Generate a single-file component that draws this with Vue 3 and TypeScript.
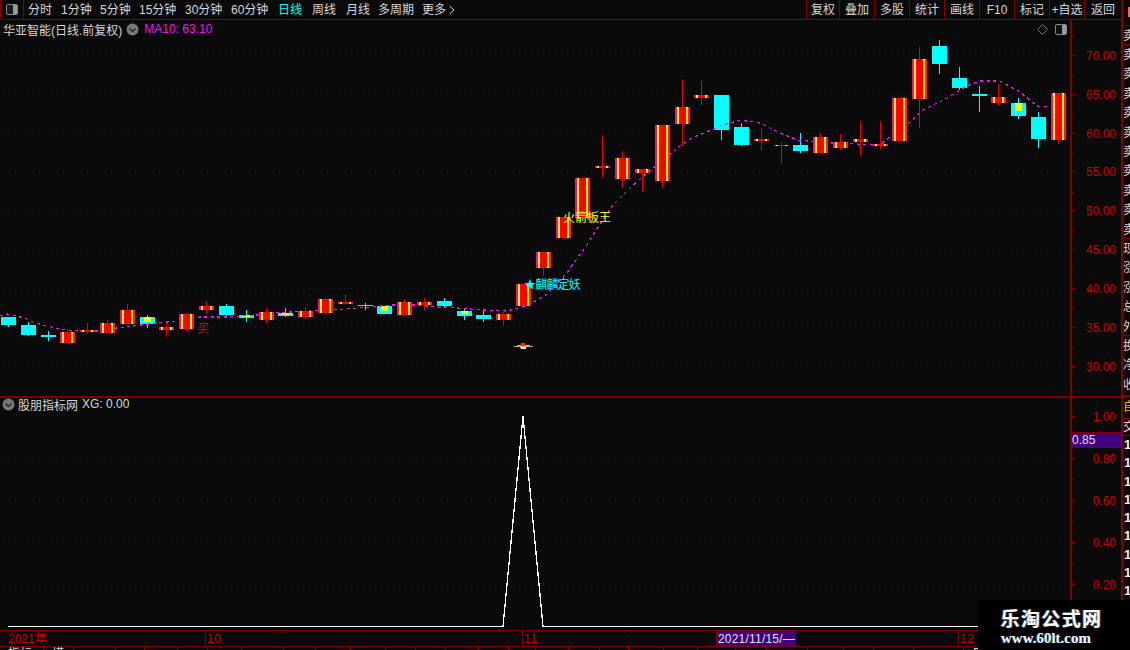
<script setup lang="ts">
type Kind = 'r' | 'c' | 'y'
type Candle = [Kind, number, number, number, number, number?]

const leftItems = [
  { t: '分时', w: 33 }, { t: '1分钟', w: 39 }, { t: '5分钟', w: 39 }, { t: '15分钟', w: 46 }, { t: '30分钟', w: 46 },
  { t: '60分钟', w: 47 }, { t: '日线', w: 34 }, { t: '周线', w: 34 }, { t: '月线', w: 32 }, { t: '多周期', w: 44 },
]
const rightItems = [
  { t: '复权', w: 33 }, { t: '叠加', w: 35 }, { t: '多股', w: 35 }, { t: '统计', w: 35 }, { t: '画线', w: 35 },
  { t: 'F10', w: 35 }, { t: '标记', w: 35 }, { t: '+自选', w: 35 }, { t: '返回', w: 37 },
]

const raw: Candle[] = [
  ['c', 317, 317, 325, 327], ['c', 322, 325, 335, 336], ['c', 331, 335, 337, 341], ['r', 329, 332, 343, 343],
  ['r', 323, 330, 332, 334], ['r', 320, 323, 333, 333], ['r', 304, 310, 324, 324], ['y', 315, 317, 324, 328, 322],
  ['r', 323, 327, 330, 337], ['r', 313, 314, 329, 331], ['r', 301, 306, 310, 314], ['c', 304, 306, 315, 316],
  ['y', 310, 315, 318, 322, 317], ['r', 308, 312, 320, 323], ['y', 308, 313, 316, 317, 315], ['r', 307, 311, 317, 319],
  ['r', 298, 299, 313, 314], ['r', 294, 302, 304, 304], ['c', 303, 305, 306, 310], ['y', 306, 306, 314, 314, 311],
  ['r', 299, 302, 315, 315], ['r', 298, 302, 305, 310], ['c', 298, 301, 306, 308], ['y', 308, 311, 316, 320, 314],
  ['c', 310, 315, 319, 322], ['r', 312, 314, 320, 326], ['r', 284, 284, 306, 306], ['r', 252, 252, 268, 276],
  ['r', 217, 217, 238, 238], ['r', 178, 178, 218, 218], ['r', 135, 166, 168, 178], ['r', 151, 158, 179, 188],
  ['r', 169, 169, 173, 191], ['r', 125, 125, 181, 188], ['r', 79, 107, 124, 146], ['r', 81, 95, 98, 105],
  ['c', 95, 95, 130, 140], ['c', 123, 127, 145, 146], ['r', 128, 139, 141, 150], ['r', 142, 145, 146, 164],
  ['c', 133, 145, 151, 153], ['r', 133, 137, 153, 153], ['r', 134, 142, 148, 150], ['r', 121, 139, 142, 156],
  ['r', 121, 144, 146, 149], ['r', 98, 98, 141, 141], ['r', 47, 59, 99, 128], ['c', 40, 46, 64, 74],
  ['c', 67, 78, 88, 90], ['c', 86, 94, 96, 112], ['r', 84, 97, 103, 106], ['y', 98, 103, 116, 119, 111],
  ['c', 112, 117, 139, 148], ['r', 93, 93, 140, 144],
]

const candles = raw.map((c, i) => ({
  kind: c[0],
  x: Math.round(1 + 19.81 * i),
  wt: c[1],
  top: c[2],
  h: Math.max(c[3] - c[2], 1),
  wb: c[4],
  yb: c[5] ?? c[2],
}))
const cool = candles.filter((c) => c.kind !== 'r')
const hot = candles.filter((c) => c.kind === 'r')

const ma =
  '0,316 8,314 15,316 25,318 33,322 43,325 55,328 67,330 80,331 100,331 117,328 133,326 157,323 177,321 200,317 227,317 257,315 ' +
  '270,313 333,310 370,307 393,305 417,305 437,307 457,308 483,310 507,311 527,306 537,300 547,294 567,273 570,268 587,245 600,224 ' +
  '613,205 633,185 653,168 680,146 692,138 720,126 740,120 760,123 780,133 797,140 830,143 880,145 890,137 907,125 923,110 947,98 ' +
  '967,86 980,81 1000,81 1020,92 1037,106 1050,107'

const priceLabels = ['70.00', '65.00', '60.00', '55.00', '50.00', '45.00', '40.00', '35.00', '30.00'].map((t, i) => ({
  t,
  y: Math.floor(55.3 + 38.88 * i),
}))
const priceMinor = Array.from({ length: 9 }, (_, i) => Math.round(36 + 38.88 * i))
const subLabels = ['1.00', '0.80', '0.60', '0.40', '0.20'].map((t, i) => ({ t, y: 416 + 42 * i }))
const subMinor = Array.from({ length: 5 }, (_, i) => 437 + 42 * i)

const stripWidths = [44, 30, 42, 29, 33, 30, 34, 42, 32, 35, 35, 30, 30, 33, 30, 27, 33, 31, 29, 35, 34, 38, 31, 41, 36, 30, 40, 50, 45, 50]
const stripLabels: Record<number, string> = { 0: '指标', 1: '模', 28: '日' }

const sideTop = ['卖', '卖', '卖', '卖', '卖', '卖', '卖', '卖', '卖', '卖']
const sideMid = ['现', '涨', '涨', '总', '外']
const sideBot = ['换', '净', '收']
const sideNums = Array.from({ length: 9 }, () => '1')
</script>

<template>
  <div class="app">
    <header class="toolbar">
      <div class="toggle">
        <span class="toggle-icon"><i></i></span>
      </div>
      <nav class="periods">
        <span v-for="p in leftItems" :key="p.t" class="period" :class="{ active: p.t === '日线' }" :style="{ width: p.w + 'px' }">{{ p.t }}</span>
        <span class="period more">更多<svg width="8" height="10" viewBox="0 0 8 10"><path d="M1.5 1 L6 5 L1.5 9" fill="none" stroke="#d8d8d8" /></svg></span>
      </nav>
      <div class="tools">
        <span v-for="b in rightItems" :key="b.t" class="tool" :style="{ width: b.w + 'px' }">{{ b.t }}</span>
      </div>
      <div class="corner"><i></i></div>
    </header>

    <div class="work">
      <div class="charts">
        <section class="pane main-pane">
          <div class="pane-head">
            <span class="name">华亚智能(日线.前复权)</span>
            <svg class="chev" width="13" height="13" viewBox="0 0 13 13"><circle cx="6.5" cy="6.5" r="6" fill="#777" /><path d="M3.5 5.5 L6.5 8.5 L9.5 5.5" fill="none" stroke="#222" stroke-width="1.4" /></svg>
            <span class="ma">MA10: 63.10</span>
          </div>
          <div class="pane-icons">
            <svg width="11" height="11" viewBox="0 0 11 11"><path d="M5.5 0.5 L10.5 5.5 L5.5 10.5 L0.5 5.5 Z" fill="none" stroke="#777" /></svg>
            <span class="toggle-icon small"><i></i></span>
          </div>
          <svg class="plot" width="1121" height="376" viewBox="0 20 1121 376">
            <g shape-rendering="crispEdges">
              <line v-for="l in priceLabels" :key="l.t" x1="3" x2="1067" :y1="l.y + 0.5" :y2="l.y + 0.5" class="grid" />
              <template v-for="(c, i) in cool" :key="'c' + i">
                <rect :x="c.x + 7" :y="c.wt" width="1" :height="c.wb - c.wt" fill="#00ffff" />
                <rect :x="c.x" :y="c.top" width="15" :height="c.h" fill="#00ffff" />
                <rect v-if="c.kind === 'y'" :x="c.x + 4" :y="c.top" width="7" :height="c.yb - c.top" fill="#ffff00" />
              </template>
              <polyline :points="ma" fill="none" stroke="#f014f0" stroke-width="1.2" stroke-dasharray="3 3.5" />
              <template v-for="(c, i) in hot" :key="'r' + i">
                <rect :x="c.x + 7" :y="c.wt" width="1" :height="c.wb - c.wt" fill="#e60000" />
                <rect :x="c.x" :y="c.top" width="15" :height="c.h" fill="#ff0a78" />
                <rect :x="c.x + 2" :y="c.top" width="11" :height="c.h" fill="#ffff00" />
                <rect :x="c.x + 4" :y="c.top" width="7" :height="c.h" fill="#ff0000" />
              </template>
              <g class="bird">
                <rect x="514" y="346" width="19" height="1" fill="#b0b0b0" />
                <rect x="517" y="345" width="13" height="2" fill="#e8b020" />
                <rect x="521" y="343" width="4" height="3" fill="#ff2020" />
                <rect x="520" y="347" width="6" height="1" fill="#ffff40" />
                <rect x="521" y="348" width="5" height="1" fill="#e8e8e8" />
              </g>
              <rect x="1070" y="20" width="2" height="376" fill="#800000" />
              <rect v-for="l in priceLabels" :key="'t' + l.t" x="1071" :y="l.y" width="5" height="1" fill="#800000" />
              <rect v-for="y in priceMinor" :key="'m' + y" x="1071" :y="y" width="3" height="1" fill="#800000" />
            </g>
            <text v-for="l in priceLabels" :key="'n' + l.t" x="1116" :y="l.y + 5" class="num">{{ l.t }}</text>
            <text x="197" y="333" class="tag buy">买</text>
            <text x="524" y="289" class="tag cyan">★麒麟定妖</text>
            <text x="563" y="222" class="tag gold">火箭板王</text>
          </svg>
        </section>

        <section class="pane sub-pane">
          <div class="pane-head sub-head">
            <svg class="chev first" width="13" height="13" viewBox="0 0 13 13"><circle cx="6.5" cy="6.5" r="6" fill="#777" /><path d="M3.5 5.5 L6.5 8.5 L9.5 5.5" fill="none" stroke="#222" stroke-width="1.4" /></svg>
            <span class="name">股朋指标网</span>
            <span class="xg">XG: 0.00</span>
          </div>
          <svg class="plot" width="1121" height="232" viewBox="0 398 1121 232">
            <g shape-rendering="crispEdges">
              <line v-for="l in subLabels.slice(1)" :key="l.t" x1="3" x2="1067" :y1="l.y + 0.5" :y2="l.y + 0.5" class="grid" />
              <polyline points="8,626.5 503,626.5 523,416 543,626.5 1000,626.5" fill="none" stroke="#ffffff" stroke-width="1.3" />
              <rect x="1070" y="398" width="2" height="232" fill="#800000" />
              <rect v-for="l in subLabels" :key="'t' + l.t" x="1071" :y="l.y" width="5" height="1" fill="#800000" />
              <rect v-for="y in subMinor" :key="'m' + y" x="1071" :y="y" width="3" height="1" fill="#800000" />
            </g>
            <text v-for="l in subLabels" :key="'n' + l.t" x="1116" :y="l.y + 5" class="num">{{ l.t }}</text>
          </svg>
          <div class="cursor-value">0.85</div>
        </section>

        <footer class="timeline">
          <span class="tick first-tick">2021年</span>
          <span class="tick at-10">10</span>
          <span class="mark at-a"></span>
          <span class="tick at-11">11</span>
          <span class="mark at-b"></span>
          <span class="cursor-date">2021/11/15/—</span>
          <span class="tick at-12">12</span>
        </footer>
        <div class="strip">
          <span v-for="(w, i) in stripWidths" :key="i" class="cell" :style="{ width: w + 'px' }">{{ stripLabels[i] ?? '' }}</span>
        </div>
      </div>

      <aside class="side">
        <div class="side-group hd"><span>卖</span></div>
        <div class="side-group g1"><span v-for="(s, i) in sideTop" :key="i">{{ s }}</span></div>
        <div class="side-group g2"><span v-for="(s, i) in sideMid" :key="i">{{ s }}</span></div>
        <div class="side-group g3"><span v-for="(s, i) in sideBot" :key="i">{{ s }}</span></div>
        <div class="side-group g4">
          <span class="self">自</span>
          <span class="deal">交</span>
          <b v-for="(s, i) in sideNums" :key="i">{{ s }}</b>
        </div>
      </aside>
    </div>

    <div class="watermark">
      <div class="wm-title">乐淘公式网</div>
      <div class="wm-url">www.60lt.com</div>
    </div>
  </div>
</template>

<style>
html, body { margin: 0; background: #0a0a0a; overflow: hidden; }
</style>

<style scoped>
.app {
  position: relative;
  width: 1130px;
  height: 650px;
  overflow: hidden;
  display: flex;
  flex-direction: column;
  background: #0a0a0a;
  color: #d8d8d8;
  font-family: "Liberation Sans", "Noto Sans CJK SC", sans-serif;
  font-size: 12px;
}
.toolbar {
  flex: none;
  height: 19px;
  display: flex;
  align-items: stretch;
  border-bottom: 1px solid #800000;
  line-height: 21px;
}
.toggle {
  width: 24px;
  box-sizing: border-box;
  border-right: 1px solid #800000;
  border-left: 1px solid #800000;
  display: flex;
  align-items: center;
  justify-content: center;
}
.toggle-icon {
  box-sizing: border-box;
  width: 12px;
  height: 11px;
  border: 1px solid #888;
  border-radius: 2px;
  display: flex;
  justify-content: flex-end;
  background: #1a1a1a;
}
.toggle-icon i { display: block; width: 4px; background: #999; }
.periods { display: flex; margin-left: 4px; width: 778px; }
.period { white-space: nowrap; flex: none; }
.period.active { color: #00ffff; }
.more svg { margin-left: 2px; vertical-align: -1px; }
.tools { display: flex; }
.tool {
  box-sizing: border-box;
  border-left: 1px solid #800000;
  text-align: center;
  white-space: nowrap;
}
.corner {
  flex: 1;
  align-self: flex-start;
  height: 20px;
  box-sizing: border-box;
  border-left: 2px solid #800000;
  background: #0a0a0a;
  display: flex;
  align-items: center;
  justify-content: flex-end;
}
.corner i { display: block; width: 2px; height: 10px; background: #ff6050; margin-top: 4px; }
.work { flex: 1; display: flex; min-height: 0; }
.charts { width: 1121px; display: flex; flex-direction: column; border-right: 2px solid #800000; }
.pane { position: relative; }
.main-pane { height: 376px; border-bottom: 2px solid #800000; }
.sub-pane { height: 232px; }
.plot { display: block; }
.pane-head {
  position: absolute;
  left: 3px;
  top: 1px;
  display: flex;
  align-items: center;
  height: 16px;
  z-index: 1;
}
.sub-head { left: 3px; top: -2px; }
.chev { margin-left: 4px; }
.chev.first { margin: 0 3px 0 -1px; }
.ma { margin-left: 5px; color: #f014f0; }
.xg { margin-left: 4px; }
.pane-icons {
  position: absolute;
  top: 4px;
  left: 1037px;
  display: flex;
  gap: 7px;
  align-items: center;
}
.toggle-icon.small { background: #111; }
.grid { stroke: #6a0808; stroke-dasharray: 1 5; }
.num { fill: #c80000; font-size: 12px; text-anchor: end; }
.tag { font-size: 12px; }
.buy { fill: #d01010; }
.cyan { fill: #00ffff; letter-spacing: -0.8px; }
.gold { fill: #ffff00; }
.cursor-value {
  position: absolute;
  left: 1072px;
  top: 34px;
  box-sizing: border-box;
  width: 49px;
  height: 16px;
  line-height: 14px;
  border-top: 1px solid #800000;
  border-bottom: 1px solid #800000;
  background: #40007f;
  color: #e0e0e0;
}
.timeline {
  position: relative;
  flex: none;
  height: 17px;
  box-sizing: border-box;
  border-top: 1px solid #800000;
  border-bottom: 1px solid #800000;
  line-height: 16px;
  color: #c80000;
}
.tick { position: absolute; top: 0; white-space: nowrap; height: 15px; padding-left: 1px; }
.first-tick { left: 7px; }
.at-10, .at-11, .at-12 { border-left: 1px solid #800000; letter-spacing: 0.5px; }
.at-10 { left: 205px; }
.at-11 { left: 522px; }
.at-12 { left: 958px; }
.mark { position: absolute; top: 0; width: 1px; height: 2px; background: #800000; }
.at-a { left: 284px; }
.at-b { left: 631px; }
.cursor-date {
  position: absolute;
  left: 716px;
  top: 0;
  box-sizing: border-box;
  width: 80px;
  height: 15px;
  padding-left: 1px;
  background: #40007f;
  border-left: 1px solid #800000;
  border-right: 1px solid #800000;
  color: #e0e0e0;
  white-space: nowrap;
  letter-spacing: 0.2px;
}
.strip { flex: 1; display: flex; overflow: hidden; min-height: 0; }
.cell {
  flex: none;
  box-sizing: border-box;
  height: 14px;
  padding-left: 8px;
  border-right: 1px solid #800000;
  line-height: 14px;
  overflow: hidden;
  color: #d8d8d8;
}
.side {
  flex: 1;
  min-width: 0;
  overflow: hidden;
  display: flex;
  flex-direction: column;
  color: #d8d8d8;
}
.side-group { box-sizing: border-box; flex: none; display: flex; flex-direction: column; border-bottom: 1px solid #800000; overflow: hidden; }
.side-group span, .side-group b { flex: none; height: 19.4px; line-height: 21px; white-space: nowrap; }
.hd { height: 25px; padding-top: 5px; }
.hd span { border-top: 1px solid #800000; }
.g1 { height: 194px; }
.g2 { height: 97px; }
.g3 { height: 61px; border-bottom: 2px solid #800000; }
.g4 { flex: 1; }
.g4 .self { color: #c8c820; height: 21px; }
.g4 .deal { border-top: 1px solid #800000; border-bottom: 1px solid #800000; height: 18px; line-height: 16px; box-sizing: border-box; }
.g4 b { height: 18.3px; line-height: 18.3px; color: #f0f0f0; font-size: 13px; padding-left: 1px; }
.watermark {
  position: absolute;
  left: 978px;
  top: 600px;
  width: 152px;
  height: 50px;
  background: #000;
  text-align: center;
  color: #fff;
  font-weight: 700;
}
.wm-title {
  margin-top: 6px;
  font-size: 19px;
  line-height: 24px;
  letter-spacing: 1.4px;
  padding-right: 5px;
  font-family: "Noto Sans CJK SC", sans-serif;
  text-shadow: 1px 0 0 rgba(255, 170, 80, 0.35), -1px 0 0 rgba(90, 160, 255, 0.45);
}
.wm-url {
  font-family: "Liberation Serif", serif;
  font-size: 15px;
  line-height: 16px;
  color: #f2f6ff;
  padding-right: 16px;
  text-shadow: -1px 0 0 rgba(90, 160, 255, 0.5);
}
</style>
